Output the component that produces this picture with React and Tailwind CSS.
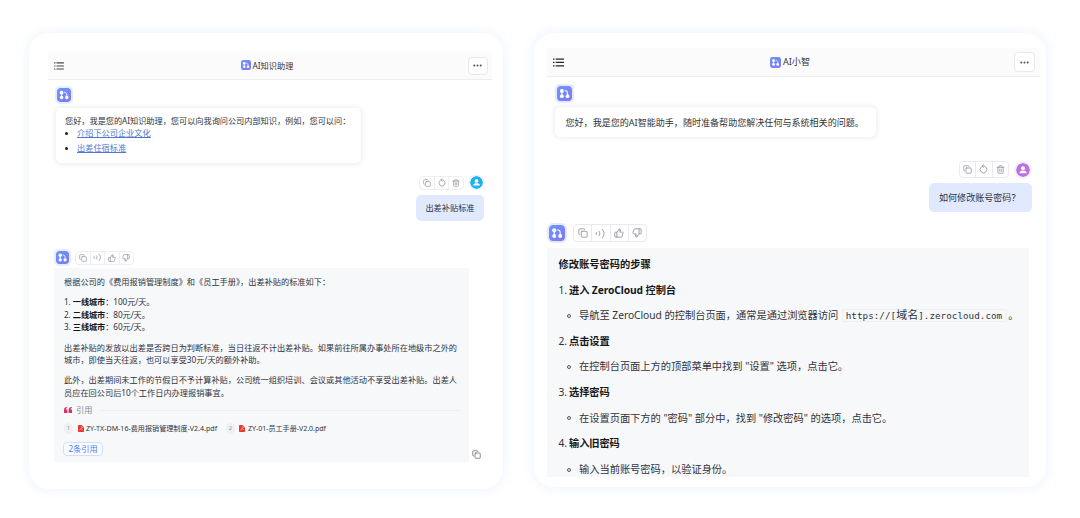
import { Copy, RotateCcw, Trash2, ThumbsUp, ThumbsDown } from 'lucide-react';

function Logo({ className }) {
    return (
        <svg viewBox="0 0 16 16" className={className}>
            <defs>
                <linearGradient id="logoFill" x1="0" y1="0" x2="1" y2="1">
                    <stop offset="0" stopColor="#6c97f8" />
                    <stop offset="1" stopColor="#7f78f8" />
                </linearGradient>
            </defs>
            <rect width="16" height="16" rx="3.6" fill="url(#logoFill)" />
            <circle cx="5.2" cy="5.3" r="2.1" fill="#fff" />
            <circle cx="5.2" cy="10.9" r="2" fill="#fff" />
            <circle cx="11.2" cy="10.9" r="2" fill="#fff" />
            <path d="M5.2 5v6M8.3 4.8c1.8 0 2.9 1.2 2.900 3.200v1.500" fill="none" stroke="#fff" strokeWidth="1.1" />
        </svg>
    );
}

function MenuIcon({ className }) {
    return (
        <svg viewBox="0 0 11 9" className={className} fill="currentColor">
            <path d="M0 .4h1.5v1.3H0zM2.7.4H11v1.3H2.7zM0 3.8h1.5v1.3H0zM2.7 3.8H11v1.3H2.7zM0 7.2h1.5v1.3H0zM2.7 7.2H11v1.3H2.7z" />
        </svg>
    );
}

function VoiceIcon({ className }) {
    return (
        <svg viewBox="0 0 24 24" className={className} fill="none" stroke="currentColor" strokeWidth="2" strokeLinecap="round">
            <path d="M3 10v4M9 7.500c2 2.700 2 6.300 0 9M16 3c5 5.500 5 12.500 0 18" />
        </svg>
    );
}

function UserAvatar({ className, color }) {
    return (
        <svg viewBox="0 0 16 16" className={className}>
            <circle cx="8" cy="8" r="8" fill={color} />
            <circle cx="8" cy="6" r="2.3" fill="#fff" />
            <path d="M3.9 11.6c0-2 1.6-2.7 4.1-2.7s4.1.7 4.1 2.7z" fill="#fff" />
        </svg>
    );
}

function Dots() {
    return (
        <svg viewBox="0 0 9 3" className="w-[9px] h-[3px]" fill="#4b4f57">
            <circle cx="1.3" cy="1.5" r="1" />
            <circle cx="4.5" cy="1.5" r="1" />
            <circle cx="7.7" cy="1.5" r="1" />
        </svg>
    );
}

function FileIcon() {
    return (
        <svg viewBox="0 0 6 7" className="w-[6px] h-[7px] shrink-0">
            <path d="M1 0h2.8L6 2.2V6c0 .6-.4 1-1 1H1C.4 7 0 6.6 0 6V1C0 .4.4 0 1 0z" fill="#e5392f" />
            <path d="M3.7.6v1.7h1.8M1.5 5c1.3-.3 1.5-1.7 1.5-1.7s.3 1.3 1.5 1.4" fill="none" stroke="#fff" strokeWidth=".5" />
        </svg>
    );
}

const cities = [
    { name: '一线城市', price: '100元/天。' },
    { name: '二线城市', price: '80元/天。' },
    { name: '三线城市', price: '60元/天。' },
];

const steps = [
    {
        title: '进入 ZeroCloud 控制台',
        body: (
            <>
                导航至 ZeroCloud 的控制台页面，通常是通过浏览器访问
                <code className="ml-[4px] mr-[1px] h-[13px] leading-[11px] pl-[2.5px] pr-[4px] border border-[#eceef1] rounded-[2px] text-[9.25px] tracking-[0.03px] font-['DejaVu_Sans_Mono','Noto_Sans_CJK_SC',monospace]">
                    https://[<span className="text-[11px]">域名</span>].zerocloud.com
                </code>
                。
            </>
        ),
    },
    { title: '点击设置', body: '在控制台页面上方的顶部菜单中找到 "设置" 选项，点击它。' },
    { title: '选择密码', body: '在设置页面下方的 "密码" 部分中，找到 "修改密码" 的选项，点击它。' },
    { title: '输入旧密码', body: '输入当前账号密码，以验证身份。' },
];

function KnowledgePanel() {
    return (
        <section className="ml-[29px] mt-[33px] w-[474px] h-[456px] shrink-0 rounded-[20px] bg-white shadow-[0_0_12px_3px_#f1f6fd] pt-[19px] text-[8.2px] text-[#30343b]">
            <header className="ml-[19px] w-[444px] h-7 bg-[#fbfbfb] border-b border-[#ededf0] flex items-center justify-between pl-[6px] pr-1">
                <MenuIcon className="w-[10px] h-[8px] text-[#44474d]" />
                <div className="flex items-center gap-[2px] pl-[2px]">
                    <Logo className="w-[10px] h-[10px]" />
                    <span className="pt-px">AI知识助理</span>
                </div>
                <button className="w-5 h-[18px] rounded-[4px] border border-[#e9e9ec] bg-white flex items-center justify-center">
                    <Dots />
                </button>
            </header>

            <Logo className="ml-[28px] mt-[8px] w-[14px] h-[14px] rounded-[3px] shadow-[0_0_0_2px_#e6edfe]" />

            <div className="ml-[27px] mt-[6px] w-[305px] h-[55px] rounded-[5px] bg-white shadow-[0_0_5px_1px_#ebecef] pl-[9px] pt-[6px]">
                <p className="h-[13px] leading-[13px] whitespace-nowrap tracking-[-0.03px]">您好，我是您的AI知识助理，您可以向我询问公司内部知识，例如，您可以问：</p>
                <ul className="text-[#4c78d2]">
                    {['介绍下公司企业文化', '出差住宿标准'].map((q) => (
                        <li key={q} className="h-[14.5px] leading-[12px] flex items-start">
                            <span className="w-[3px] h-[3px] mt-[5px] mr-[9px] rounded-full bg-[#222]" />
                            <a className="underline underline-offset-1">{q}</a>
                        </li>
                    ))}
                </ul>
            </div>

            <div className="mt-[12px] pr-[21px] h-[15px] flex items-center justify-end text-[#8b8f96]">
                <div className="flex w-[45px] h-[14px] rounded-[4px] border border-[#eeeef1] divide-x divide-[#eeeef1] mr-[6px]">
                    <span className="flex-1 flex items-center justify-center"><Copy size={8} /></span>
                    <span className="flex-1 flex items-center justify-center"><RotateCcw size={8} className="rotate-45" /></span>
                    <span className="flex-1 flex items-center justify-center"><Trash2 size={8} /></span>
                </div>
                <UserAvatar className="w-[13px] h-[13px] -mr-px rounded-full shadow-[0_0_0_1.5px_#eef3f8]" color="#1fb0ee" />
            </div>
            <div className="ml-[387px] mt-[5px] w-[68px] h-[26px] rounded-[5px] bg-[#e1e9fe] flex items-center justify-center">出差补贴标准</div>

            <div className="ml-[27px] mt-[29px] h-[15px] flex items-center gap-[6px] text-[#8b8f96]">
                <Logo className="w-[13px] h-[13px] rounded-[3px] shadow-[0_0_0_2px_#e6edfe]" />
                <div className="flex w-[59px] h-[14px] rounded-[4px] border border-[#eeeef1] divide-x divide-[#eeeef1]">
                    <span className="flex-1 flex items-center justify-center"><Copy size={8} /></span>
                    <span className="flex-1 flex items-center justify-center"><VoiceIcon className="w-[9px] h-[9px]" /></span>
                    <span className="flex-1 flex items-center justify-center"><ThumbsUp size={8} /></span>
                    <span className="flex-1 flex items-center justify-center"><ThumbsDown size={8} /></span>
                </div>
            </div>

            <div className="flex items-end mt-[3px] ml-[25px]">
                <article className="w-[415px] h-[194px] bg-[#f7f8fa] pl-[10px] pt-[8px] leading-[12.5px] whitespace-nowrap">
                    <p>根据公司的《费用报销管理制度》和《员工手册》，出差补贴的标准如下：</p>
                    <ol className="mt-[7.5px]">
                        {cities.map((c, i) => (
                            <li key={c.name} className="tracking-[-0.08px]">{i + 1}. <b className="text-[#15181c]">{c.name}</b>：{c.price}</li>
                        ))}
                    </ol>
                    <p className="mt-[8px]">
                        出差补贴的发放以出差是否跨日为判断标准，当日往返不计出差补贴。如果前往所属办事处所在地级市之外的<br />
                        城市，即使当天往返，也可以享受30元/天的额外补助。
                    </p>
                    <p className="mt-[7.5px]">
                        此外，出差期间未工作的节假日不予计算补贴，公司统一组织培训、会议或其他活动不享受出差补贴。出差人<br />
                        员应在回公司后10个工作日内办理报销事宜。
                    </p>
                    <div className="mt-[5px] h-[12px] flex items-center text-[#85898f]">
                        <svg viewBox="0 0 8 6" className="w-[8px] h-[6px] mr-[4px]" fill="#dc2d69">
                            <path d="M3.2 0v1C2.2 1.2 1.8 1.8 1.8 2.6h1.6V6H0V3C0 1.2 1.2 0 3.2 0zM7.8 0v1C6.8 1.2 6.4 1.8 6.4 2.6H8V6H4.6V3c0-1.8 1.2-3 3.2-3z" />
                        </svg>
                        引用
                        <span className="ml-[7px] w-[362px] h-px bg-[#eceef1]" />
                    </div>
                    <div className="mt-[6px] h-[12px] flex items-center text-[7.1px]">
                        <span className="w-[9px] h-[11px] rounded-full bg-[#eff0f2] text-[#999] text-[6px] leading-[11px] text-center mr-[4.5px]">1</span>
                        <FileIcon />
                        <span className="ml-[2.5px] w-[131px]">ZY-TX-DM-16-费用报销管理制度-V2.4.pdf</span>
                        <span className="ml-[9px] w-[9px] h-[11px] rounded-full bg-[#eff0f2] text-[#999] text-[6px] leading-[11px] text-center mr-[4px]">2</span>
                        <FileIcon />
                        <span className="ml-[3px] tracking-[-0.04px]">ZY-01-员工手册-V2.0.pdf</span>
                    </div>
                    <button className="-ml-[1px] mt-[8px] w-[40px] h-[14px] rounded-[4px] border border-[#d3dffb] bg-[#fafcff] text-[#4a7cf5] flex items-center justify-center">2条引用</button>
                </article>
                <Copy size={9} className="ml-[3px] mb-[3px] text-[#666a70]" />
            </div>
        </section>
    );
}

function AssistantPanel() {
    return (
        <section className="ml-[31px] mt-[33px] w-[512px] h-[454px] shrink-0 rounded-[20px] bg-white shadow-[0_0_12px_3px_#f1f6fd] pt-[15px] text-[9.06px] text-[#30343b]">
            <header className="ml-[13px] w-[493px] h-[29px] bg-[#fbfbfb] border-b border-[#ededf0] flex items-center justify-between pl-[6px] pr-[5px]">
                <MenuIcon className="w-[11px] h-[9px] text-[#25272b]" />
                <div className="flex items-center gap-[2px] pl-[2px]">
                    <Logo className="w-[11px] h-[11px]" />
                    <span>AI小智</span>
                </div>
                <button className="w-[21px] h-5 rounded-[4px] border border-[#e9e9ec] bg-white flex items-center justify-center">
                    <Dots />
                </button>
            </header>

            <Logo className="ml-[23px] mt-[9px] w-[15px] h-[15px] rounded-[3px] shadow-[0_0_0_2px_#e6e9fc]" />

            <div className="ml-[21px] mt-[6px] w-[321px] h-[30px] rounded-[5px] bg-white shadow-[0_0_5px_1px_#ebecef] pl-[10.5px] leading-[31px] whitespace-nowrap">
                您好，我是您的AI智能助手，随时准备帮助您解决任何与系统相关的问题。
            </div>

            <div className="mt-[24px] pr-[16px] h-[17px] flex items-center justify-end gap-[7px] text-[#8b8f96]">
                <div className="flex w-[50px] h-[17px] rounded-[4px] border border-[#eaeaee] divide-x divide-[#eaeaee]">
                    <span className="flex-1 flex items-center justify-center"><Copy size={9} /></span>
                    <span className="flex-1 flex items-center justify-center"><RotateCcw size={9} className="rotate-45" /></span>
                    <span className="flex-1 flex items-center justify-center"><Trash2 size={9} /></span>
                </div>
                <UserAvatar className="w-[14px] h-[14px] rounded-full shadow-[0_0_0_2px_#f5eefa]" color="#bd70df" />
            </div>
            <div className="ml-[395px] mt-[5px] w-[103px] h-[29px] rounded-[5px] bg-[#e1e9fe] pl-[10px] leading-[29px]">如何修改账号密码？</div>

            <div className="ml-[15px] mt-[12px] h-[18px] flex items-center gap-[8px] text-[#8b8f96]">
                <Logo className="w-[16px] h-[16px] rounded-[4px] shadow-[0_0_0_2px_#e6e9fc]" />
                <div className="flex w-[74px] h-[18px] rounded-[4px] border border-[#eaeaee] divide-x divide-[#eaeaee]">
                    <span className="flex-1 flex items-center justify-center"><Copy size={10} /></span>
                    <span className="flex-1 flex items-center justify-center"><VoiceIcon className="w-[11px] h-[11px]" /></span>
                    <span className="flex-1 flex items-center justify-center"><ThumbsUp size={10} /></span>
                    <span className="flex-1 flex items-center justify-center"><ThumbsDown size={10} /></span>
                </div>
            </div>

            <article className="ml-[13px] mt-[6px] w-[482px] h-[229px] bg-[#f7f8fa] pl-[11.5px] pt-[4px] text-[10.25px] whitespace-nowrap overflow-hidden">
                <h3 className="h-[25.6px] leading-[25.6px] font-bold text-[#15181c]">修改账号密码的步骤</h3>
                <ol>
                    {steps.map((s, i) => (
                        <li key={s.title}>
                            <p className="h-[25.6px] leading-[25.6px] tracking-[-0.1px]"><span className="inline-block w-[10.5px]">{i + 1}.</span><b className="text-[#15181c]">{s.title}</b></p>
                            <div className="h-[25.6px] leading-[25.6px] flex items-center">
                                <span className="ml-[8.5px] mr-[8px] w-[4px] h-[4px] rounded-full border border-[#55595f]" />
                                <span className="flex items-center whitespace-pre tracking-[-0.03px]">{s.body}</span>
                            </div>
                        </li>
                    ))}
                </ol>
            </article>
        </section>
    );
}

export default function App() {
    return (
        <main className="w-[1080px] h-[518px] bg-white flex items-start overflow-hidden font-['Noto_Sans','Noto_Sans_CJK_SC',sans-serif]">
            <KnowledgePanel />
            <AssistantPanel />
        </main>
    );
}
